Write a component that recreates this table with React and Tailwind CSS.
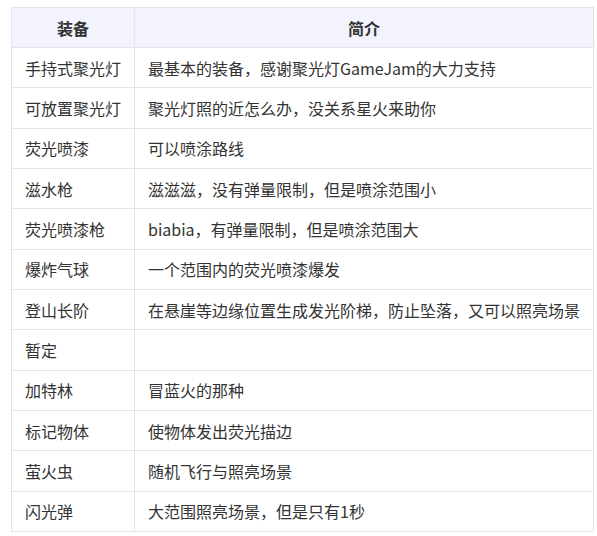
const rows = [
  ["手持式聚光灯", "最基本的装备，感谢聚光灯GameJam的大力支持"],
  ["可放置聚光灯", "聚光灯照的近怎么办，没关系星火来助你"],
  ["荧光喷漆", "可以喷涂路线"],
  ["滋水枪", "滋滋滋，没有弹量限制，但是喷涂范围小"],
  ["荧光喷漆枪", "biabia，有弹量限制，但是喷涂范围大"],
  ["爆炸气球", "一个范围内的荧光喷漆爆发"],
  ["登山长阶", "在悬崖等边缘位置生成发光阶梯，防止坠落，又可以照亮场景"],
  ["暂定", ""],
  ["加特林", "冒蓝火的那种"],
  ["标记物体", "使物体发出荧光描边"],
  ["萤火虫", "随机飞行与照亮场景"],
  ["闪光弹", "大范围照亮场景，但是只有1秒"],
];

export default function App() {
  return (
    <div
      className="bg-white w-[597px] h-[536px] pl-[11px] pt-[7px]"
      style={{ fontFamily: '"Noto Sans CJK SC", "Noto Sans", sans-serif' }}
    >
      <table className="w-[582px] border-collapse text-[16px] text-[#333]">
        <thead>
          <tr className="bg-[#f2f3fc] h-[40px]">
            <th className="w-[123px] border border-[#e4e4e7] font-bold">装备</th>
            <th className="border border-[#e4e4e7] font-bold">简介</th>
          </tr>
        </thead>
        <tbody>
          {rows.map(([name, desc]) => (
            <tr key={name} className="h-[40.33px]">
              <td className="border border-[#e4e4e7] px-[13px] whitespace-nowrap">{name}</td>
              <td className="border border-[#e4e4e7] px-[13px] whitespace-nowrap">{desc}</td>
            </tr>
          ))}
        </tbody>
      </table>
    </div>
  );
}
